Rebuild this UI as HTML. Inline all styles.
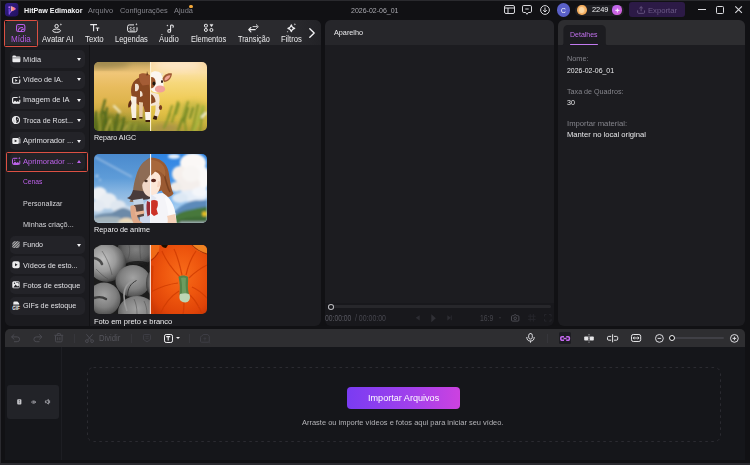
<!DOCTYPE html>
<html lang="pt">
<head>
<meta charset="utf-8">
<title>HitPaw Edimakor</title>
<style>
*{box-sizing:border-box;margin:0;padding:0}
html,body{width:750px;height:465px;overflow:hidden;background:#111114}
body{position:relative;font-family:"Liberation Sans",sans-serif;font-size:8px;color:#e6e6e8;line-height:1}
.a{position:absolute}
.t{position:absolute;white-space:nowrap;line-height:1.16;transform-origin:0 0}
svg{position:absolute;overflow:visible}
.panel{position:absolute;background:#1c1c20;border-radius:6px;overflow:hidden}
.hdr{position:absolute;left:0;top:0;right:0;height:25px;background:#29292d}
.sb{position:absolute;left:10px;width:75px;height:18px;border-radius:5px;background:#232328}
.ar{position:absolute;left:76.5px;width:0;height:0;border-left:2.5px solid transparent;border-right:2.5px solid transparent;border-top:3px solid #f2f2f4}
.thumb{position:absolute;left:94px;width:113px;height:69px;border-radius:5px;overflow:hidden}
.thumb svg{left:0;top:0}
.vd{position:absolute;width:1px;height:9px;top:333.5px;background:#36363b}
</style>
</head>
<body>
<!-- window frame -->
<div class="a" style="left:0;top:0;width:750px;height:465px;background:#111114"></div>
<div class="a" style="left:0;top:0;width:1px;height:465px;background:#2a2a2f"></div>
<div class="a" style="left:0;top:0;width:750px;height:1px;background:#2a2a2e"></div>
<div class="a" style="left:0;top:463px;width:750px;height:2px;background:#2a2a2f"></div>

<!-- TITLE BAR -->
<svg style="left:5.3px;top:3.3px" width="13.4" height="13.4" viewBox="0 0 14 14"><defs><linearGradient id="lg" x1="0" y1="0" x2="1" y2="0"><stop offset="0" stop-color="#d8b0ff"/><stop offset=".4" stop-color="#ff9466"/><stop offset="1" stop-color="#e04ce0"/></linearGradient><linearGradient id="lb" x1="0" y1="0" x2="1" y2="1"><stop offset="0" stop-color="#34208c"/><stop offset="1" stop-color="#22105e"/></linearGradient></defs><rect width="14" height="14" rx="3.2" fill="url(#lb)"/><path d="M4.300 6.200c.2 2.200.2 4 .1 5.400" stroke="#7c50ec" stroke-width="1.300" fill="none" stroke-linecap="round"/><path d="M6.400 8.600L4.800 10.600" stroke="#9a5cf0" stroke-width="1.100" stroke-linecap="round"/><path d="M6 3.200c1.800.5 3.800 1.400 5 2.400.4.400.4.800 0 1.100-1.300.9-3.100 1.600-4.900 2.100z" fill="url(#lg)"/><circle cx="4.400" cy="4.400" r=".9" fill="#c070ff"/></svg>
<div class="a" style="left:189.400px;top:4.500px;width:3.300px;height:3.300px;border-radius:50%;background:#f5a93a"></div>
<!-- layout icon -->
<svg style="left:503.8px;top:5.3px" width="11" height="9" viewBox="0 0 11 9" fill="none" stroke="#d8d8dc" stroke-width="1"><rect x=".5" y=".5" width="10" height="8" rx="1.5"/><path d="M.5 3h10M4 3v5.5"/></svg>
<!-- chat icon -->
<svg style="left:522px;top:5px" width="10" height="10.5" viewBox="0 0 10 10.5" fill="none" stroke="#d8d8dc" stroke-width="1"><path d="M1.8.5h6.4a1.3 1.3 0 0 1 1.3 1.3v4.4a1.3 1.3 0 0 1-1.3 1.3H6.3L5 9.3 3.7 7.5H1.8A1.3 1.3 0 0 1 .5 6.200V1.8A1.3 1.3 0 0 1 1.800.5z"/><path d="M3.300 4h3.400"/></svg>
<!-- download icon -->
<svg style="left:540.4px;top:4.9px" width="10" height="10" viewBox="0 0 10 10" fill="none" stroke="#d8d8dc" stroke-width="1"><circle cx="5" cy="5" r="4.4"/><path d="M5 2.400v4.400M3.200 5.200L5 7l1.800-1.800"/></svg>
<!-- avatar -->
<div class="a" style="left:556.6px;top:3.3px;width:13.4px;height:13.4px;border-radius:50%;background:#5a60c8"></div>
<!-- coin pill -->
<div class="a" style="left:574.8px;top:4.800px;width:48.800px;height:11.200px;border-radius:6px;background:#202024"></div>
<div class="a" style="left:577.2px;top:5.3px;width:9.400px;height:9.400px;border-radius:50%;background:radial-gradient(circle at 50% 50%,#f8d6a0 0,#f6c080 35%,#f0a048 75%,#e89038 100%)"></div>
<div class="a" style="left:579.300px;top:7.400px;width:5.200px;height:5.200px;border-radius:50%;background:#fbd9a8;opacity:.8"></div>
<div class="a" style="left:612.4px;top:5.400px;width:9.200px;height:9.200px;border-radius:50%;background:linear-gradient(135deg,#b868f0,#d860d8)"></div>
<svg style="left:614.6px;top:7.600px" width="4.800" height="4.800" viewBox="0 0 5 5" stroke="#f6e6ff" stroke-width="1.1" fill="none"><path d="M2.500.4v4.200M.4 2.500h4.200"/></svg>
<!-- export -->
<div class="a" style="left:629px;top:2.400px;width:56px;height:15px;border-radius:3px;background:#2c1a46"></div>
<svg style="left:637px;top:6px" width="8.200" height="8" viewBox="0 0 9 9.500" preserveAspectRatio="none" fill="none" stroke="#6b5a86" stroke-width="1"><path d="M4.500 6.300V.9M2.600 2.700L4.500.8l1.900 1.900M.7 5.200v2.300a1.200 1.200 0 0 0 1.200 1.200h5.200a1.200 1.200 0 0 0 1.200-1.200V5.200"/></svg>
<!-- window controls -->
<div class="a" style="left:698px;top:9.400px;width:8.200px;height:1.100px;background:#dcdce0"></div>
<div class="a" style="left:715.8px;top:6px;width:8.400px;height:8px;border:1.100px solid #dcdce0;border-radius:1.500px"></div>
<svg style="left:734.8px;top:6.300px" width="7.200" height="7.200" viewBox="0 0 7.200 7.200" stroke="#dcdce0" stroke-width="1.100" fill="none"><path d="M.3.3l6.600 6.600M6.900.3L.3 6.900"/></svg>


<!-- LEFT PANEL -->
<div class="panel" style="left:4.5px;top:20px;width:316.600px;height:306px">
  <div class="hdr" style="background:linear-gradient(90deg,#2a2a2e 0,#2a2a2e 285px,#222226 317px)"></div>
  <div class="a" style="left:0;top:25px;width:84.600px;height:281px;background:#1b1b1f"></div>
  <div class="a" style="left:84.600px;top:25px;width:1px;height:281px;background:#121215"></div>
</div>
<!-- TABS -->
<div class="a" style="left:4.200px;top:20.200px;width:33.900px;height:26.500px;border:1.600px solid #dc5043;border-radius:1.500px"></div>
<!-- midia -->
<svg style="left:15.700px;top:24px" width="9.400" height="8" viewBox="0 0 9.400 8" fill="none" stroke="#b85ee8" stroke-width="1.100"><rect x=".55" y=".55" width="8.300" height="6.900" rx="1.800"/><path d="M2.300 6.800C2.600 4.500 4.500 3.300 7 3.600M5.200 7c.2-1.300 1.200-2 2.900-1.900"/><circle cx="2.900" cy="2.700" r=".5" fill="#b85ee8" stroke="none"/></svg>
<!-- avatar -->
<svg style="left:52.400px;top:22.500px" width="11" height="10" viewBox="0 0 11 10" fill="none" stroke="#ececee" stroke-width="1"><circle cx="4.600" cy="3.100" r="1.700"/><ellipse cx="4.600" cy="7.700" rx="3.900" ry="1.700"/><path d="M8.900.2l.4 1 .9.300-.9.300-.4 1-.4-1-.9-.3.900-.3z" fill="#ececee" stroke="none"/></svg>
<!-- texto -->
<svg style="left:90px;top:24.300px" width="10" height="8" viewBox="0 0 10 8" fill="none" stroke="#ececee" stroke-width="1.100"><path d="M.2.600h6.800M3.600.600v6.600M5.700 4h3.600M7.500 4v3"/></svg>
<!-- legendas -->
<svg style="left:126.600px;top:22.600px" width="11" height="9.500" viewBox="0 0 11 9.500" fill="none" stroke="#ececee" stroke-width="1"><path d="M7 1.900H2.300A1.700 1.700 0 0 0 .6 3.600v3.600a1.700 1.700 0 0 0 1.700 1.700h6a1.700 1.700 0 0 0 1.700-1.700V4.300"/><path d="M4.600 4.800a1 1 0 1 0 0 1.300M7.800 4.800a1 1 0 1 0 0 1.300" stroke-width=".8"/><path d="M2.600 7.900h5.400" stroke-width=".7"/><path d="M9.400 0l.4 1 .9.300-.9.300-.4 1-.4-1-.9-.3.900-.3z" fill="#ececee" stroke="none"/></svg>
<!-- audio -->
<svg style="left:165.500px;top:23.500px" width="8.500" height="9" viewBox="0 0 8.500 9" fill="none" stroke="#ececee" stroke-width="1.100"><circle cx="3.200" cy="6.900" r="1.400"/><path d="M4.600 6.900V1.800c0-.9 2.700-1.400 2.700.5 0 .5-.2 1-.6 1.300"/><path d="M1.400.6l.3.700.7.300-.7.300-.3.700-.3-.7-.7-.3.700-.3z" fill="#ececee" stroke="none"/></svg>
<!-- elementos -->
<svg style="left:204px;top:24.200px" width="9.400" height="8" viewBox="0 0 9.400 8" fill="none" stroke="#ececee" stroke-width="1"><rect x=".5" y=".4" width="2.800" height="2.600" rx=".6"/><path d="M6 .4h3l-1.500 2.400z" fill="#ececee" stroke-width=".5"/><circle cx="1.900" cy="6" r="1.500"/><circle cx="7.400" cy="6" r="1.500"/></svg>
<!-- transicao -->
<svg style="left:248px;top:23.800px" width="11" height="8.500" viewBox="0 0 11 8.500" fill="none" stroke="#ececee" stroke-width="1.100" stroke-linecap="round" stroke-linejoin="round"><path d="M7.300 5.600H.8M2.900 3.500L.7 5.600l2.200 2.200"/><path d="M5 2.600h5M8.300.7l2 1.900-2 1.900" stroke-width=".9" stroke-dasharray="1.600 .9"/></svg>
<!-- filtros -->
<svg style="left:286.400px;top:22.800px" width="10.500" height="10.500" viewBox="0 0 10.500 10.500" fill="none" stroke="#ececee" stroke-width="1.200" stroke-linejoin="round"><path d="M5.300 1.900c.4 2 1.400 3 3.400 3.400-2 .4-3 1.400-3.400 3.400-.4-2-1.400-3-3.400-3.400 2-.4 3-1.400 3.400-3.400z"/><path d="M8.900 0l.3.900.9.300-.9.300-.3.900-.3-.9-.9-.3.900-.3zM1.600 8l.25.600.6.250-.6.250-.25.600-.25-.6-.6-.25.6-.25z" fill="#ececee" stroke="none"/></svg>
<!-- chevron -->
<svg style="left:309.400px;top:28px" width="6" height="10" viewBox="0 0 6 10" fill="none" stroke="#f4f4f6" stroke-width="1.300" stroke-linecap="round" stroke-linejoin="round"><path d="M.8.700L5.200 5 .8 9.300"/></svg>

<!-- SIDEBAR -->
<div class="sb" style="top:50px;height:18px"></div>
<div class="ar" style="top:57.8px"></div>
<div class="sb" style="top:70.5px;height:18px"></div>
<div class="ar" style="top:78.3px"></div>
<div class="sb" style="top:91px;height:18px"></div>
<div class="ar" style="top:98.8px"></div>
<div class="sb" style="top:111.4px;height:18px"></div>
<div class="ar" style="top:119.2px"></div>
<div class="sb" style="top:131.8px;height:18px"></div>
<div class="ar" style="top:139.6px"></div>
<div class="sb" style="top:152.6px;height:17.6px"></div>
<div class="ar" style="top:159.6px;border-top:none;border-bottom:3px solid #bd62ea"></div>
<div class="sb" style="top:236px;height:18px"></div>
<div class="ar" style="top:243.8px"></div>
<div class="sb" style="top:256.3px;height:18px"></div>
<div class="sb" style="top:276.4px;height:18px"></div>
<div class="sb" style="top:296.6px;height:18px"></div>
<div class="a" style="left:6.300px;top:151.900px;width:81.700px;height:19.800px;border:1.500px solid #dc5043;border-radius:1.500px"></div>
<svg style="left:11.9px;top:55.0px" width="8.4" height="7.6" viewBox="0 0 8.4 7.6" fill="none" stroke="#ececee" stroke-width="1.150"><path d="M.4 1.600a1.100 1.100 0 0 1 1.100-1.100h1.800l.9 1h3.100a1.100 1.100 0 0 1 1.100 1.100v3.600a1.100 1.100 0 0 1-1.100 1.100H1.500A1.100 1.100 0 0 1 .4 6.200z" fill="#ececee" stroke="none"/><path d="M.4 2.900h8" stroke="#232328" stroke-width=".5"/></svg>
<svg style="left:11.9px;top:75.6px" width="8.4" height="7.9" viewBox="0 0 8.4 7.9" fill="none" stroke="#ececee" stroke-width="1.150"><path d="M5.800 1.500H1.800A1.200 1.200 0 0 0 .6 2.700v3.400a1.200 1.200 0 0 0 1.200 1.200h4.800a1.200 1.200 0 0 0 1.200-1.200V3.600"/><path d="M3.300 3.100v2.600l2.200-1.300z" fill="#ececee" stroke="none"/><path d="M7.400 0l.3.800.8.300-.8.300-.3.800-.3-.8-.8-.3.800-.3z" fill="#ececee" stroke="none"/></svg>
<svg style="left:11.9px;top:96.0px" width="8.4" height="7.9" viewBox="0 0 8.4 7.9" fill="none" stroke="#ececee" stroke-width="1.150"><path d="M5.600 1.500H1.800A1.200 1.200 0 0 0 .6 2.700v3.400a1.200 1.200 0 0 0 1.200 1.200h4.800a1.200 1.200 0 0 0 1.200-1.200V3.800"/><path d="M1 6.600l2-2.200 1.600 1.500 1.200-1 1.800 1.700v.6H1z" fill="#ececee" stroke="none"/><path d="M7.400 0l.3.800.8.300-.8.300-.3.800-.3-.8-.8-.3.800-.3z" fill="#ececee" stroke="none"/></svg>
<svg style="left:12.1px;top:115.8px" width="8" height="8" viewBox="0 0 8 8" fill="none" stroke="#ececee" stroke-width="1.150"><circle cx="4" cy="4" r="3.500"/><path d="M4 .6C2.300 2 2.300 3.600 3.400 4.200c1 .5.700 1.600-.3 3.100" /><path d="M4 .6a3.400 3.400 0 0 0 0 6.800z" fill="#ececee" stroke="none" opacity=".85"/><circle cx="5.400" cy="3.300" r=".5" fill="#ececee" stroke="none"/></svg>
<svg style="left:11.9px;top:136.6px" width="8.6" height="7.4" viewBox="0 0 8.6 7.4" fill="none" stroke="#ececee" stroke-width="1.150"><rect x=".3" y=".9" width="6.600" height="6" rx="1.200" fill="#ececee" stroke="none"/><path d="M2.700 2.500v2.800l2.400-1.400z" fill="#232328" stroke="none"/><path d="M7.900 1.600v4.800" stroke-width=".9"/><path d="M7.200 0l.25.600.6.250-.6.250-.25.600-.25-.6-.6-.25.6-.25z" fill="#ececee" stroke="none"/></svg>
<svg style="left:11.9px;top:156.8px" width="8.4" height="8" viewBox="0 0 8.4 8" fill="none" stroke="#bd62ea" stroke-width="1"><path d="M5.400 1.300H1.700A1.200 1.200 0 0 0 .5 2.500v3.800a1.200 1.200 0 0 0 1.200 1.200h4.900a1.200 1.200 0 0 0 1.200-1.200V3.600"/><path d="M.9 6.900l2.100-2.500 1.600 1.500 1.200-.9 1.700 1.600v.6H.9z" fill="#bd62ea" stroke="none"/><circle cx="2.700" cy="3.200" r=".6" fill="#bd62ea" stroke="none"/><path d="M7.300 0l.35.850.85.350-.85.350-.35.850-.35-.85-.85-.35.850-.35z" fill="#bd62ea" stroke="none"/></svg>
<svg style="left:12.100px;top:240.7px" width="8" height="7.400" viewBox="0 0 8 7.400"><defs><clipPath id="fc"><rect x=".3" y=".3" width="7.400" height="6.800" rx="1.100"/></clipPath></defs><g clip-path="url(#fc)" stroke="#ececee" stroke-width=".75"><path d="M-3 7.400l7.400-7.400M-1.400 7.400l7.400-7.400M.2 7.400l7.400-7.400M1.800 7.400l7.400-7.400M3.400 7.400l7.400-7.400M5 7.400l7.400-7.400M-4.600 7.400l7.400-7.400"/></g></svg>
<svg style="left:12.1px;top:260.8px" width="8" height="7.6" viewBox="0 0 8 7.6" fill="none" stroke="#ececee" stroke-width="1.150"><rect x=".3" y=".3" width="7.400" height="7" rx="1.800" fill="#ececee" stroke="none"/><path d="M3 2.300v3l2.600-1.500z" fill="#232328" stroke="none"/></svg>
<svg style="left:12.1px;top:281.0px" width="8" height="7.6" viewBox="0 0 8 7.6" fill="none" stroke="#ececee" stroke-width="1.150"><rect x=".3" y=".3" width="7.400" height="7" rx="1.500" fill="#ececee" stroke="none"/><path d="M1.300 6.500l2.300-2.900 1.700 1.800.9-.8 1.300 1.300v.6z" fill="#232328" stroke="none"/><circle cx="2.500" cy="2.300" r=".7" fill="#232328" stroke="none"/><path d="M4 1.400h2.800v2" stroke="#232328" stroke-width=".6"/></svg>
<svg style="left:12.1px;top:300.6px" width="8" height="8.6" viewBox="0 0 8 8.6" fill="none" stroke="#ececee" stroke-width="1.150"><path d="M1.300 3.600V1.800A1.300 1.300 0 0 1 2.600.5h2.800l1.700 1.700v1.400z" fill="#ececee" stroke="none"/><path d="M1 4.200h6.400" stroke-width=".5"/></svg>
<div class="t" style="left:12.300px;top:305.700px;font-size:4.600px;font-weight:bold;color:#ececee;letter-spacing:-.1px">GIF</div>
<!-- THUMBNAILS -->
<div class="thumb" style="top:62px">
<svg width="113" height="69" viewBox="0 0 113 69">
<defs>
<linearGradient id="c1" x1="0" y1="0" x2="0" y2="1"><stop offset="0" stop-color="#b49a5a"/><stop offset=".07" stop-color="#d4b068"/><stop offset=".16" stop-color="#f0c678"/><stop offset=".36" stop-color="#e8bc5e"/><stop offset=".58" stop-color="#deb44c"/><stop offset=".72" stop-color="#c8a840"/><stop offset=".84" stop-color="#a49a34"/><stop offset=".93" stop-color="#868a2c"/><stop offset="1" stop-color="#6e7624"/></linearGradient>
<linearGradient id="c2" x1="0" y1="0" x2="0" y2="1"><stop offset="0" stop-color="#f8d6a4"/><stop offset=".15" stop-color="#fbe0a4"/><stop offset=".3" stop-color="#f6d87c"/><stop offset=".55" stop-color="#efcc58"/><stop offset=".75" stop-color="#dfbe44"/><stop offset=".9" stop-color="#c6ae3c"/><stop offset="1" stop-color="#b09e38"/></linearGradient>
<filter id="b1" x="-20%" y="-20%" width="140%" height="140%"><feGaussianBlur stdDeviation="1"/></filter>
<filter id="b3" x="-30%" y="-30%" width="160%" height="160%"><feGaussianBlur stdDeviation="3"/></filter>
<filter id="b05" x="-20%" y="-20%" width="140%" height="140%"><feGaussianBlur stdDeviation=".45"/></filter>
</defs>
<rect width="56.500" height="69" fill="url(#c1)"/>
<rect x="56.500" width="56.500" height="69" fill="url(#c2)"/>
<ellipse cx="10" cy="1" rx="26" ry="5" fill="#a08a50" filter="url(#b3)"/>
<ellipse cx="84" cy="3" rx="24" ry="6" fill="#fde6c4" filter="url(#b3)"/>
<ellipse cx="12" cy="62" rx="18" ry="10" fill="#64701e" opacity=".8" filter="url(#b3)"/>
<ellipse cx="38" cy="67" rx="16" ry="5" fill="#767e2a" opacity=".8" filter="url(#b3)"/>
<ellipse cx="100" cy="50" rx="16" ry="10" fill="#c4b844" filter="url(#b3)"/>
<ellipse cx="72" cy="66" rx="14" ry="4" fill="#a8904a" filter="url(#b3)"/>
<g filter="url(#b1)" stroke-linecap="round" fill="none">
<path d="M3 69L11 38M9 69L13 46M15 69L10 50M20 69L24 52M1 69L2 50M27 69L30 56" stroke="#546a1c" stroke-width="2.200"/><path d="M6 69L5 52M18 69L17 56M24 69L27 60M34 69L36 60M40 69L42 62" stroke="#9ea236" stroke-width="1.600"/><path d="M12 69L16 58M30 69L33 63" stroke="#d0bc50" stroke-width="1.300"/>
<path d="M20 44l6 6" stroke="#f0e8c0" stroke-width="2.200"/>
<path d="M78 60l6-20M86 64l8-24M98 69l6-26M106 69l3-22M70 66l6-14M92 69l-2-14M74 56l4-12M82 52l3-10" stroke="#86962a" stroke-width="2"/><path d="M90 60l4-14M84 69l4-12M96 56l3-10" stroke="#6e8424" stroke-width="1.800"/>
<path d="M100 69l9-24" stroke="#a8b43c" stroke-width="3"/>
<path d="M108 55l4-4" stroke="#f4f0d0" stroke-width="2.400"/>
</g>
<!-- cow -->
<g filter="url(#b05)">
<path d="M37.500 33c-1.500-8 1-15 8-17.500 3-1.500 7-1 10 0l1 27-8 2c-5-1-9-5-11-11.500z" fill="#8a4824"/>
<path d="M45 12.500c3-2 8-1.500 11.500 1v9l-8 1c-3-3-4-7-3.500-11z" fill="#a45c34"/>
<path d="M53 9l1.200 4-1.800.6z" fill="#6a3a1c"/>
<path d="M41 22c2-1 4 0 4 3s-2 5-4 4zM46 29c2 0 3 2 2.500 5l-2.500 1z" fill="#f0e0d0"/>
<path d="M37 34l5.500 1-.3 21h-4.200c-1-8-1.500-15-1-22z" fill="#f8efe2"/>
<path d="M38 56h4.200v2H38z" fill="#3a1e10"/>
<path d="M45 40l4 .5-.5 15h-3.200z" fill="#e6c8a4"/>
<path d="M45.300 55h3.200v1.600h-3.200z" fill="#4a2814"/>
<path d="M48.500 34l7.500-1 .2 18h-5c-1.500-6-2.500-11-2.700-17z" fill="#8a4824"/>
<path d="M51 50h5.200v8H51.500z" fill="#fbf4ea"/>
<path d="M51.500 58h4.700v2h-4.700z" fill="#3a1e10"/>
<path d="M36.800 38c-2 1.500-3 4-2.600 7.500 1.800.4 3.200-1.500 3.400-4.500z" fill="#5e2c14"/>
<!-- chest & raised leg -->
<path d="M56.500 30l8 2c1.500 4 1.500 8 0 11l-8 1z" fill="#f4e6d6"/>
<path d="M56.500 32c3 1 5 4 5 8l-5 2z" fill="#8a4824"/>
<path d="M62 40c2.500 1 4.500 3 4.500 6-.5 4-2 7-3 10l-3.500-1c1-4 1.800-7 1.500-10z" fill="#f2e2d0"/>
<ellipse cx="66.500" cy="45.500" rx="1.600" ry="2.600" fill="#7a3e1e"/>
<path d="M60 53.500l3.500 1-1 3.500-3.700-1z" fill="#3a1c0e"/>
<!-- head -->
<path d="M56.500 11c3-2.500 8-2.500 10.500.5 2 3 2.500 8 2.500 12 0 4-3 7-7 7-3 0-5-1.500-6-4z" fill="#fbf6f0"/>
<path d="M56.500 15c2.500-.5 4.500 1 5 4 .5 3-1 6-3 7l-2 .5z" fill="#9a542c"/>
<ellipse cx="60" cy="21.500" rx="1.500" ry="1.900" fill="#1e1410"/>
<ellipse cx="68" cy="19.500" rx="1" ry="1.600" fill="#2a1a14"/>
<ellipse cx="66" cy="27" rx="5.200" ry="3.600" fill="#f0a09a"/>
<path d="M67 13.500l1-3.500 1.400 3z" fill="#e8e0d0"/>
<path d="M68.500 17c1-4 5-6.500 9.500-5.500-.5 5-3.500 8-8 8.500z" fill="#a05a34"/>
<path d="M70.500 17c1-2.600 3.200-4 6-3.800-.8 3-2.800 4.800-5.600 5.200z" fill="#f0a494"/>
</g>
<rect x="56" width="1.100" height="69" fill="#fdf1d2"/>
</svg>
</div>
<div class="thumb" style="top:154px;height:68.600px">
<svg width="113" height="69" viewBox="0 0 113 69">
<defs>
<linearGradient id="a1" x1="0" y1="0" x2="0" y2="1"><stop offset="0" stop-color="#4a8ace"/><stop offset=".35" stop-color="#5e9cd8"/><stop offset=".55" stop-color="#88b6e2"/><stop offset=".75" stop-color="#a8c8e6"/><stop offset="1" stop-color="#b8ccdc"/></linearGradient>
<linearGradient id="a2" x1="0" y1="0" x2="0" y2="1"><stop offset="0" stop-color="#2f84e2"/><stop offset=".45" stop-color="#4a98ea"/><stop offset=".75" stop-color="#9cc8f0"/><stop offset="1" stop-color="#c0d8ec"/></linearGradient>
<filter id="b08" x="-20%" y="-20%" width="140%" height="140%"><feGaussianBlur stdDeviation=".8"/></filter>
</defs>
<rect width="56.500" height="69" fill="url(#a1)"/>
<rect x="56.500" width="56.500" height="69" fill="url(#a2)"/>
<g filter="url(#b08)">
<path d="M1 3l37 20" stroke="#a4c4e6" stroke-width="1.500" opacity=".8"/>
<circle cx="3" cy="22" r="1.600" fill="#a8c8e8"/><circle cx="6" cy="26" r="1.200" fill="#9cc0e4"/>
<!-- left clouds -->
<ellipse cx="5" cy="40" rx="8" ry="7" fill="#eef1f5"/>
<ellipse cx="14" cy="47" rx="9" ry="8" fill="#e8edf3"/>
<ellipse cx="4" cy="52" rx="7" ry="6" fill="#e4eaf2"/>
<ellipse cx="24" cy="52" rx="8" ry="6" fill="#dfe7f0"/>
<ellipse cx="32" cy="56" rx="6" ry="4" fill="#d0dfee"/>
<path d="M0 62c6-2 12-3 18-3 4-3 8-5 12-5 5 1 9 4 13 6l6 3v6H0z" fill="#6c8aa8"/>
<path d="M0 64c8-2 18-2 26-.5l4 5.500H0z" fill="#a4b4bc"/>
<path d="M24 69c1-4 6-6 11-5 4 1 6 3 7 5z" fill="#ead8b8"/>
<!-- right clouds -->
<ellipse cx="99" cy="9" rx="13" ry="10" fill="#fbf8f6"/>
<ellipse cx="86" cy="20" rx="8" ry="8" fill="#f6f0ec"/>
<ellipse cx="106" cy="24" rx="10" ry="13" fill="#fbf9f8"/>
<ellipse cx="94" cy="30" rx="12" ry="9" fill="#f4efec"/>
<ellipse cx="97" cy="20" rx="9" ry="8" fill="#f8f5f3"/>
<ellipse cx="82" cy="33" rx="6" ry="5" fill="#f0ece8"/>
<ellipse cx="80" cy="2.500" rx="6" ry="2.400" fill="#e4eefa"/>
<ellipse cx="98" cy="42" rx="16" ry="6" fill="#e6eef8"/>
<ellipse cx="86" cy="44" rx="8" ry="5" fill="#dde8f4"/>
<ellipse cx="106" cy="38" rx="8" ry="5" fill="#f4f6fa"/>
<path d="M80 58c4-4 8-7 13-9 4-2 8-3 12-2.500l8-.5v14H80z" fill="#5c8aba"/>
<path d="M80 62c6-4 12-6 18-6.500 6-1.500 10-2 15-3v17H80z" fill="#47783a"/>
<path d="M84 66c8-3 18-4 29-3v6H84z" fill="#3c6a34"/>
<path d="M86 67.500h27V69H86z" fill="#a4acb4"/>
<circle cx="110.500" cy="60" r="2.400" fill="#f0c41c"/>
</g>
<g filter="url(#b05)">
<!-- hair back -->
<path d="M56.500 3.500v40l-6 1c-3 1-5 .5-7 2-2 1.500-5 2-8 1 2-3 3.500-6 3.500-10 .3-5 1.500-11 3.500-17 2-7 7-14 14-17z" fill="#8a6a52"/>
<path d="M33 44c3-1 5-4 6-8l17.500 2v7l-9 1c-4 2-9 1-14.500-2z" fill="#4a3a3a"/>
<path d="M56.500 3.500c9 0 16 5 18 14 1.500 8 2 16 5 22-2 3-5 4-8 3l-4-6-11 4z" fill="#9a5a30"/>
<path d="M70 20c2 6 3 13 6 18" stroke="#7a4222" stroke-width="1.500" fill="none"/>
<!-- face -->
<path d="M49 20c2-2 5-3 7.500-3v26c-4-.5-7-4-8-9-.8-5-.8-10 .5-14z" fill="#f2d8c8"/>
<path d="M56.500 17c5 0 9 2 10 6 .8 6 0 13-4 17-2 2-4 3-6 3z" fill="#fce6d6"/>
<path d="M64 27c2 0 3 1.500 2.500 3.500s-2 3-3.500 2.500z" fill="#f6d4c0"/>
<!-- fringe -->
<path d="M46 13c3-5 6.500-7 10.500-7v14c-2 3-4 6-7 8-1.500 2-2 5-2 8-2.500-7-3.500-15-1.500-23z" fill="#8e6c54"/>
<path d="M56.500 6c6 0 11 2.500 13.500 7 1.500 3.500 1.500 7 1 10-2-3.500-5-6-9-7-1.500 2.500-3.500 4.500-5.500 6z" fill="#a8683a"/>
<ellipse cx="52" cy="27" rx="1.700" ry="1.300" fill="#4a3028"/>
<ellipse cx="59.500" cy="26.500" rx="2.600" ry="1.700" fill="#5a261c"/>
<!-- shirt -->
<path d="M46 69c-.5-10 2-20 10.500-25v25z" fill="#ccd6ea"/>
<path d="M56.500 42c4-2 8-3 12-3 6 3 10 9 12 16 1 5 2 9 2 14h-26z" fill="#f4f4f8"/>
<path d="M73 43c4 4 7 10 8.500 17l-7 2c-1-7-2-13-4-18z" fill="#fafafc"/>
<path d="M73 62l8-2c.8 3 1.200 6 1.500 9h-9c.5-2.500.3-5-.5-7z" fill="#f4d0b8"/>
<path d="M56.500 40l6 4-4 5-2-1z" fill="#e4e8f2"/>
<!-- bow -->
<path d="M53 47l3.500 1.500v12l-3 2c-1-5-1.500-10-.5-15.500z" fill="#9a2a34"/>
<path d="M56.500 47c2-1.500 5-1.500 7 0 .8 3 .3 6-1 8l1.500 5-4 2-3.500-3z" fill="#cc3028"/>
<!-- glass + hand -->
<path d="M39 46l10-1.500 1 6-10 1z" fill="#c4d4e6"/>
<path d="M39.800 51l9.600-1 .6 12-8 2z" fill="#5a4844"/>
<path d="M36.500 52c2-1.500 4-1 5 1l2 10c1 3 3 5 5 6h-9c-2-4-3.500-9-3-17z" fill="#e0a888"/>
<path d="M41 58l9-1.500.5 3-9 2z" fill="#e8b494"/>
</g>
<rect x="56" width="1.100" height="69" fill="#f6f8fc"/>
</svg>
</div>
<div class="thumb" style="top:245px;height:68.800px">
<svg width="113" height="69" viewBox="0 0 113 69">
<defs>
<radialGradient id="p1" cx=".4" cy=".4" r=".65"><stop offset="0" stop-color="#c0c0c0"/><stop offset=".5" stop-color="#9a9a9a"/><stop offset=".8" stop-color="#686868"/><stop offset="1" stop-color="#2e2e2e"/></radialGradient>
<radialGradient id="p2" cx=".5" cy=".45" r=".62"><stop offset="0" stop-color="#808080"/><stop offset=".55" stop-color="#606060"/><stop offset="1" stop-color="#262626"/></radialGradient>
<radialGradient id="p4" cx=".5" cy=".4" r=".65"><stop offset="0" stop-color="#a2a2a2"/><stop offset=".55" stop-color="#808080"/><stop offset=".85" stop-color="#585858"/><stop offset="1" stop-color="#2c2c2c"/></radialGradient>
<radialGradient id="p3" cx=".55" cy=".42" r=".75"><stop offset="0" stop-color="#f86c1a"/><stop offset=".45" stop-color="#ee560e"/><stop offset=".8" stop-color="#e04408"/><stop offset="1" stop-color="#c43406"/></radialGradient>
</defs>
<rect width="56.500" height="69" fill="#1c1c1c"/>
<g filter="url(#b05)">
<ellipse cx="42" cy="6" rx="19" ry="15" fill="url(#p2)"/>
<ellipse cx="44" cy="19" rx="12" ry="3" fill="#161616" opacity=".8"/>
<ellipse cx="13" cy="18" rx="19" ry="19" fill="url(#p1)"/>
<ellipse cx="39" cy="36" rx="17.500" ry="16" fill="url(#p4)"/>
<ellipse cx="10" cy="54" rx="16.500" ry="16.500" fill="url(#p4)"/>
<ellipse cx="43" cy="67" rx="19" ry="16" fill="url(#p4)"/>
<ellipse cx="58" cy="38" rx="6" ry="12" fill="url(#p2)"/>
<path d="M0 13c4 1 7 3 8 6" stroke="#4c4c4c" stroke-width="2.600" fill="none" stroke-linecap="round"/>
<path d="M41 35c-7 2-11 8-11 16 0 5 1 10 3 15" stroke="#9a9a9a" stroke-width="1.600" fill="none"/>
<path d="M41 35c-6 3-9 8-9 16" stroke="#3a3a3a" stroke-width="1" fill="none" transform="translate(1.500 .5)"/>
<path d="M0 53c5-1.500 9-1 12 1" stroke="#3c3c3c" stroke-width="2.400" fill="none" stroke-linecap="round"/>
<path d="M35 0c1 4 1 9-1 14M46 0c0 5 0 10 1 15M8 6c4 6 8 14 10 24M2 24c4 4 8 8 12 10M40 54c2 4 3 9 3 15M50 56c2 4 3 8 3 13" stroke="#4a4a4a" stroke-width=".9" fill="none" opacity=".55"/>
</g>
<rect x="56.500" width="56.500" height="69" fill="url(#p3)"/>
<g filter="url(#b05)">
<path d="M56.500 0h9c0 4-1 8-3 10-2 2-4 4-6 5z" fill="#f06a16"/>
<path d="M67 0h7l-2 3c-2 0-4-1-5-3z" fill="#1e0e06"/>
<path d="M98 0h15v9c-5-1-10-3-14-7z" fill="#ee8222"/>
<path d="M98 0c4 5 9 7 15 9" stroke="#a83206" stroke-width="1.200" fill="none"/>
<path d="M56.500 16c3-2 6-5 8-9" stroke="#b83206" stroke-width="1.200" fill="none"/>
<path d="M56.500 20v49h4c-2-8-3-16-2-24 .5-8 1-16 1-24z" fill="#d23c08" opacity=".8"/>
<g stroke="#d03c08" stroke-width="1.200" fill="none" opacity=".85">
<path d="M86 32c-8-8-14-16-18-26M88 30c-2-9-4-18-8-26M92 30c2-9 5-17 10-24M95 33c6-6 12-10 18-13M84 38c-9 1-18 4-27 9M85 46c-8 5-14 12-19 23M90 56c0 5 0 9-1 13M96 50c5 5 9 11 12 19M98 42c5 2 10 6 15 11"/>
</g>
<path d="M84.500 32c2-2 7-2 9.500 0 .5 4-.5 8 0 12l1 6c-3 1.500-7 1.500-9.500 0 .5-6 .5-12-1-18z" fill="#55844a"/>
<path d="M87 33c1.500-.8 3.500-.8 5 0-.5 5-.5 10 .5 15h-4.500c.3-5 0-10-1-15z" fill="#6c9c5e"/>
<path d="M86 49c3-1 7-1 9.500.5 1 3 .5 6-2 7.500-3 1-6 0-7.500-2-.8-2-.8-4 0-6z" fill="#bcd6b4"/>
</g>
<rect x="55.800" width="1.200" height="69" fill="#f8d6cc"/>
</svg>
</div>


<!-- MIDDLE PANEL -->
<div class="panel" style="left:325px;top:20px;width:229px;height:306px;background:#18181c">
  <div class="hdr" style="background:#26262a"></div>
  <div class="a" style="left:0;top:25px;width:229px;height:258px;background:#1c1c20"></div>
</div>
<!-- PLAYER CONTROLS -->
<div class="a" style="left:333px;top:305.200px;width:217.500px;height:3px;border-radius:1.500px;background:#27272b"></div>
<div class="a" style="left:328px;top:304px;width:6px;height:5.600px;border-radius:50%;border:1.300px solid #bcbcc0;background:#18181c"></div>
<svg style="left:414.500px;top:315.200px" width="5" height="5.600" viewBox="0 0 5 5.600"><path d="M4.700.2v5.200L.6 2.800z" fill="#2c2c32"/></svg>
<svg style="left:431px;top:313.800px" width="5" height="8.600" viewBox="0 0 5 8.600"><path d="M.3.300v8l4.500-4z" fill="#303036"/></svg>
<svg style="left:447px;top:315.200px" width="5" height="5.600" viewBox="0 0 5 5.600"><path d="M.3.200v5.200l3.600-2.600z" fill="#2c2c32"/><path d="M4.300.4v4.800" stroke="#2c2c32" stroke-width=".8"/></svg>
<div class="a" style="left:499px;top:317.200px;width:0;height:0;border-left:1.800px solid transparent;border-right:1.800px solid transparent;border-top:2.200px solid #303036"></div>
<svg style="left:511px;top:314.300px" width="8.400" height="7.600" viewBox="0 0 8.400 7.600" fill="none" stroke="#4c4c53" stroke-width="1"><path d="M1.500 1.700h1.300l.7-1h1.400l.7 1h1.300a1 1 0 0 1 1 1v3.400a1 1 0 0 1-1 1H1.500a1 1 0 0 1-1-1V2.700a1 1 0 0 1 1-1z"/><circle cx="4.200" cy="4.300" r="1.300"/></svg>
<svg style="left:527.500px;top:314.200px" width="7.600" height="7.600" viewBox="0 0 7.600 7.600" fill="none" stroke="#25252b" stroke-width="1"><path d="M2.200 0v7.600M5.400 0v7.600M0 2.200h7.600M0 5.400h7.600"/></svg>
<svg style="left:544px;top:314.200px" width="7.600" height="7.600" viewBox="0 0 7.600 7.600" fill="none" stroke="#25252b" stroke-width="1"><path d="M.5 2.500V.5h2M5.100.5h2v2M7.100 5.100v2h-2M2.500 7.100h-2v-2"/></svg>


<!-- RIGHT PANEL -->
<div class="panel" style="left:558px;top:20px;width:187px;height:306px">
  <div class="hdr" style="background:#2d2d30"></div>
  <svg style="left:2.500px;top:5px" width="48" height="20.500" viewBox="0 0 48 20.500"><path d="M0 20.500c1.600 0 2.400-.9 2.400-2.500V4.500A4.500 4.500 0 0 1 6.900 0h33.400a4.500 4.500 0 0 1 4.500 4.500V18c0 1.600.8 2.500 2.400 2.500z" fill="#1c1c20"/></svg>
  <div class="a" style="left:12px;top:23.600px;width:28px;height:1.300px;background:#c27af0;border-radius:1px"></div>
</div>

<!-- TIMELINE -->
<div class="a" style="left:4.5px;top:329px;width:740.5px;height:18px;background:#2e2e31;border-radius:5px 5px 0 0"></div>
<div class="a" style="left:4.5px;top:347px;width:740.5px;height:113px;background:#15161a"></div>
<div class="a" style="left:61px;top:347px;width:1px;height:113px;background:#1d1e23"></div>
<div class="a" style="left:7px;top:385px;width:52px;height:34px;background:#222328;border-radius:3px"></div>
<svg style="left:87px;top:367px" width="634" height="75"><rect x=".5" y=".5" width="633" height="74" rx="6" fill="none" stroke="#2b2b31" stroke-width="1" stroke-dasharray="2.600 3.400"/></svg>
<div class="a" style="left:346.7px;top:386.7px;width:113px;height:22px;border-radius:4px;background:linear-gradient(90deg,#7a3cf2,#a040ec 55%,#cc42e0)"></div>
<!-- TIMELINE TOOLBAR ICONS -->
<svg style="left:11px;top:333.800px" width="9.500" height="8" viewBox="0 0 9.500 8" fill="none" stroke="#4a4a51" stroke-width="1" stroke-linecap="round" stroke-linejoin="round"><path d="M3 .6L.6 2.900 3 5.200M.8 2.900h5.400a2.400 2.400 0 0 1 0 4.800H3.400"/></svg>
<svg style="left:32.800px;top:333.800px" width="9.500" height="8" viewBox="0 0 9.500 8" fill="none" stroke="#4a4a51" stroke-width="1" stroke-linecap="round" stroke-linejoin="round"><path d="M6.500.6l2.400 2.300-2.400 2.300M8.700 2.900H3.300a2.400 2.400 0 0 0 0 4.800h2.800"/></svg>
<svg style="left:53.800px;top:333.400px" width="9.600" height="9.400" viewBox="0 0 9.600 9.400" fill="none" stroke="#4a4a51" stroke-width="1"><path d="M.4 2.300h8.800M3.200 2.200V1.100a.6.600 0 0 1 .6-.6h2a.6.600 0 0 1 .6.600v1.100M1.500 2.500v5.300a1.100 1.100 0 0 0 1.100 1.100h4.400a1.100 1.100 0 0 0 1.100-1.100V2.500M3.700 4.200v3M5.900 4.200v3"/></svg>
<div class="vd" style="left:74.400px"></div>
<svg style="left:85px;top:333.600px" width="9" height="9" viewBox="0 0 9 9" fill="none" stroke="#4a4a51" stroke-width="1"><circle cx="1.900" cy="7.100" r="1.400"/><circle cx="7.100" cy="7.100" r="1.400"/><path d="M2.700 6L7.600.3M6.300 6L1.400.3"/></svg>
<div class="vd" style="left:131.200px"></div>
<svg style="left:143.400px;top:334px" width="8" height="8.400" viewBox="0 0 8 8.400" fill="none" stroke="#3e3e45" stroke-width="1"><path d="M1.500.5h5a1 1 0 0 1 1 1v4L4 7.900.5 5.500v-4a1 1 0 0 1 1-1z"/><path d="M2.400 2.600h3.200M2.400 4.300h3.200" stroke-width=".7"/></svg>
<div class="a" style="left:163.800px;top:333.600px;width:9.400px;height:9.600px;border:1.100px solid #f2f2f4;border-radius:2.200px"></div>
<svg style="left:166.400px;top:336.200px" width="4.400" height="4.600" viewBox="0 0 4.400 4.600" fill="none" stroke="#f2f2f4" stroke-width="1.100"><path d="M.2.600h4M2.200.6v4"/></svg>
<div class="a" style="left:176.300px;top:336.900px;width:0;height:0;border-left:2.100px solid transparent;border-right:2.100px solid transparent;border-top:2.700px solid #f2f2f4"></div>
<div class="vd" style="left:189.300px"></div>
<svg style="left:200.200px;top:333.800px" width="10.600" height="9.600" viewBox="0 0 10.600 9.600" fill="none" stroke="#3e3e45" stroke-width="1"><path d="M1.600 2.300L3.200.5h4.600l1.500 1.800v4.900a1 1 0 0 1-1 1H1.500a1 1 0 0 1-1-1V3.300a1 1 0 0 1 1-1z"/><path d="M4.900 6.600V3.800M3.600 5l1.300-1.300L6.200 5" stroke-width=".8"/><path d="M9.300 8.400l.9.900" stroke-width=".8"/></svg>
<!-- right group -->
<svg style="left:525.500px;top:333.400px" width="9" height="9.600" viewBox="0 0 9 9.600" fill="none" stroke="#dcdce0" stroke-width="1" stroke-linecap="round"><rect x="2.700" y=".5" width="3.600" height="5.600" rx="1.800"/><path d="M.8 4.400a3.700 3.700 0 0 0 7.400 0M4.500 8.100v1.200"/></svg>
<div class="vd" style="left:547.300px"></div>
<div class="a" style="left:559px;top:332px;width:12.200px;height:12px;border-radius:1.500px;background:#1d1d22"></div>
<svg style="left:560px;top:335.700px" width="10.200" height="5" viewBox="0 0 10.200 5" fill="none" stroke="#c568f0" stroke-width="1.500"><path d="M4 .8H1.900a1.100 1.100 0 0 0-1.100 1.100v1.200a1.100 1.100 0 0 0 1.100 1.100H4M6.200.8h2.100a1.100 1.100 0 0 1 1.100 1.100v1.200a1.100 1.100 0 0 1-1.100 1.100H6.200M3.600 2.500h3" /></svg>
<svg style="left:583.600px;top:333.600px" width="10" height="9" viewBox="0 0 10 9"><rect x=".2" y="2.500" width="4" height="4" rx=".8" fill="#e6e6e8"/><rect x="5.800" y="2.500" width="4" height="4" rx=".8" fill="#e6e6e8"/><path d="M5 .2v8.600" stroke="#e6e6e8" stroke-width=".8" stroke-dasharray="1.200 .8"/></svg>
<svg style="left:606.800px;top:333.800px" width="11.200" height="8.600" viewBox="0 0 11.200 8.600" fill="none" stroke="#e6e6e8" stroke-width="1"><path d="M4.200 2.400H1.700a1.200 1.200 0 0 0-1.200 1.200v1.400a1.200 1.200 0 0 0 1.200 1.200h2.500M7 2.400h2.500a1.200 1.200 0 0 1 1.200 1.200v1.400a1.200 1.200 0 0 1-1.200 1.200H7M5.600.3v8"/></svg>
<svg style="left:631px;top:334.200px" width="10.200" height="8" viewBox="0 0 10.200 8" fill="none" stroke="#e6e6e8" stroke-width="1"><rect x=".5" y=".5" width="9.200" height="7" rx="1.800"/><path d="M2.300 4h5.600M3.500 2.700L2.200 4l1.300 1.300M6.700 2.700L8 4 6.700 5.300" stroke-width=".9"/></svg>
<svg style="left:655px;top:333.600px" width="8.800" height="8.800" viewBox="0 0 8.800 8.800" fill="none" stroke="#dcdce0" stroke-width="1"><circle cx="4.400" cy="4.400" r="3.900"/><path d="M2.600 4.400h3.600"/></svg>
<div class="a" style="left:673px;top:337.300px;width:51.200px;height:1.500px;border-radius:1px;background:#404046"></div>
<div class="a" style="left:668.600px;top:334.700px;width:6.600px;height:6.600px;border-radius:50%;border:1.500px solid #f2f2f4;background:#101013"></div>
<svg style="left:729.900px;top:333.600px" width="8.800" height="8.800" viewBox="0 0 8.800 8.800" fill="none" stroke="#dcdce0" stroke-width="1"><circle cx="4.400" cy="4.400" r="3.900"/><path d="M2.600 4.400h3.600M4.400 2.600v3.600"/></svg>
<!-- track header icons -->
<svg style="left:16.600px;top:399.300px" width="4.600" height="5.600" viewBox="0 0 4.600 5.600"><rect x=".2" y=".2" width="4.200" height="5.200" rx=".9" fill="#c8c8cc"/><path d="M2.300 1.200v3.200" stroke="#222328" stroke-width=".8" stroke-dasharray=".9 .6"/></svg>
<svg style="left:31px;top:399.900px" width="5.400" height="4.200" viewBox="0 0 5.400 4.200" fill="none" stroke="#a0a0a6" stroke-width=".8"><path d="M.4 2.100C1.500.6 3.900.6 5 2.100 3.900 3.600 1.500 3.600.4 2.100z"/><circle cx="2.700" cy="2.100" r=".7"/></svg>
<svg style="left:45.200px;top:399.300px" width="5.600" height="5.600" viewBox="0 0 5.600 5.600" fill="none" stroke="#b4b4ba" stroke-width=".8"><path d="M.4 1.900h1.200L3.400.5v4.600L1.600 3.700H.4z"/><path d="M4.600 1.400v2.800" /></svg>


<div class="t" style="left:24.0px;top:6.85px;font-size:7.50px;color:#f4f4f6;transform:scaleX(0.955);font-weight:bold;">HitPaw Edimakor</div>
<div class="t" style="left:88.0px;top:6.73px;font-size:7.70px;color:#85858c;transform:scaleX(0.959);">Arquivo</div>
<div class="t" style="left:119.5px;top:6.73px;font-size:7.70px;color:#85858c;transform:scaleX(0.962);">Configurações</div>
<div class="t" style="left:173.5px;top:6.73px;font-size:7.70px;color:#85858c;transform:scaleX(0.966);">Ajuda</div>
<div class="t" style="left:350.5px;top:5.58px;font-size:7.80px;color:#a8a8ae;transform:scaleX(0.898);">2026-02-06_01</div>
<div class="t" style="left:592.0px;top:6.39px;font-size:7.60px;color:#f0f0f2;transform:scaleX(0.976);">2249</div>
<div class="t" style="left:648.0px;top:5.66px;font-size:8.00px;color:#6b5a86;transform:scaleX(0.959);">Exportar</div>
<div class="t" style="left:560.8px;top:6.91px;font-size:7.40px;color:#ffffff;transform:scaleX(0.898);">C</div>
<div class="t" style="left:10.7px;top:34.81px;font-size:8.60px;color:#b45ae6;transform:scaleX(0.942);">Mídia</div>
<div class="t" style="left:41.5px;top:34.81px;font-size:8.60px;color:#ececee;transform:scaleX(0.904);">Avatar AI</div>
<div class="t" style="left:85.3px;top:34.81px;font-size:8.60px;color:#ececee;transform:scaleX(0.910);">Texto</div>
<div class="t" style="left:115.0px;top:34.81px;font-size:8.60px;color:#ececee;transform:scaleX(0.869);">Legendas</div>
<div class="t" style="left:159.3px;top:34.81px;font-size:8.60px;color:#ececee;transform:scaleX(0.896);">Áudio</div>
<div class="t" style="left:190.8px;top:34.81px;font-size:8.60px;color:#ececee;transform:scaleX(0.867);">Elementos</div>
<div class="t" style="left:237.7px;top:34.81px;font-size:8.60px;color:#ececee;transform:scaleX(0.850);">Transição</div>
<div class="t" style="left:280.7px;top:34.81px;font-size:8.60px;color:#ececee;transform:scaleX(0.889);">Filtros</div>
<div class="t" style="left:22.7px;top:54.56px;font-size:8.00px;color:#e0e0e4;transform:scaleX(0.920);">Mídia</div>
<div class="t" style="left:22.7px;top:74.96px;font-size:8.00px;color:#e0e0e4;transform:scaleX(0.908);">Vídeo de IA.</div>
<div class="t" style="left:22.7px;top:95.46px;font-size:8.00px;color:#e0e0e4;transform:scaleX(0.936);">Imagem de IA</div>
<div class="t" style="left:22.7px;top:115.66px;font-size:8.00px;color:#e0e0e4;transform:scaleX(0.883);">Troca de Rost...</div>
<div class="t" style="left:22.7px;top:136.06px;font-size:8.00px;color:#e0e0e4;transform:scaleX(0.951);">Aprimorador ...</div>
<div class="t" style="left:22.7px;top:156.86px;font-size:8.00px;color:#bd62ea;transform:scaleX(0.951);">Aprimorador ...</div>
<div class="t" style="left:23.3px;top:177.38px;font-size:7.80px;color:#bd62ea;transform:scaleX(0.860);">Cenas</div>
<div class="t" style="left:23.3px;top:198.78px;font-size:7.80px;color:#d6d6da;transform:scaleX(0.909);">Personalizar</div>
<div class="t" style="left:23.3px;top:220.18px;font-size:7.80px;color:#d6d6da;transform:scaleX(0.928);">Minhas criaçõ...</div>
<div class="t" style="left:22.7px;top:240.26px;font-size:8.00px;color:#e0e0e4;transform:scaleX(0.882);">Fundo</div>
<div class="t" style="left:22.7px;top:260.56px;font-size:8.00px;color:#e0e0e4;transform:scaleX(0.909);">Vídeos de esto...</div>
<div class="t" style="left:22.7px;top:280.56px;font-size:8.00px;color:#e0e0e4;transform:scaleX(0.927);">Fotos de estoque</div>
<div class="t" style="left:22.7px;top:300.76px;font-size:8.00px;color:#e0e0e4;transform:scaleX(0.901);">GIFs de estoque</div>
<div class="t" style="left:94.3px;top:134.49px;font-size:7.60px;color:#f0f0f2;transform:scaleX(0.934);">Reparo AIGC</div>
<div class="t" style="left:94.3px;top:226.19px;font-size:7.60px;color:#f0f0f2;transform:scaleX(0.961);">Reparo de anime</div>
<div class="t" style="left:94.3px;top:317.69px;font-size:7.60px;color:#f0f0f2;transform:scaleX(0.991);">Foto em preto e branco</div>
<div class="t" style="left:334.0px;top:28.28px;font-size:7.80px;color:#ececee;transform:scaleX(0.929);">Aparelho</div>
<div class="t" style="left:325.0px;top:313.54px;font-size:8.20px;color:#585860;transform:scaleX(0.828);">00:00:00</div>
<div class="t" style="left:355.0px;top:313.54px;font-size:8.20px;color:#46464e;transform:scaleX(0.851);">/ 00:00:00</div>
<div class="t" style="left:480.0px;top:313.54px;font-size:8.20px;color:#45454c;transform:scaleX(0.835);">16:9</div>
<div class="t" style="left:570.3px;top:29.88px;font-size:7.80px;color:#c070ec;transform:scaleX(0.897);">Detalhes</div>
<div class="t" style="left:566.8px;top:54.38px;font-size:7.80px;color:#85858c;transform:scaleX(0.936);">Nome:</div>
<div class="t" style="left:566.8px;top:66.89px;font-size:7.60px;color:#e8e8ea;transform:scaleX(0.914);">2026-02-06_01</div>
<div class="t" style="left:566.8px;top:86.68px;font-size:7.80px;color:#85858c;transform:scaleX(0.918);">Taxa de Quadros:</div>
<div class="t" style="left:566.8px;top:99.29px;font-size:7.60px;color:#e8e8ea;transform:scaleX(0.935);">30</div>
<div class="t" style="left:566.8px;top:118.68px;font-size:7.80px;color:#85858c;transform:scaleX(0.985);">Importar material:</div>
<div class="t" style="left:566.8px;top:131.29px;font-size:7.60px;color:#e8e8ea;transform:scaleX(1.006);">Manter no local original</div>
<div class="t" style="left:98.7px;top:333.51px;font-size:8.60px;color:#55555c;transform:scaleX(0.892);">Dividir</div>
<div class="t" style="left:367.6px;top:393.40px;font-size:8.80px;color:#ffffff;transform:scaleX(1.033);">Importar Arquivos</div>
<div class="t" style="left:301.7px;top:419.21px;font-size:7.40px;color:#b4b4b8;transform:scaleX(1.011);">Arraste ou importe vídeos e fotos aqui para iniciar seu vídeo.</div>
</body>
</html>
